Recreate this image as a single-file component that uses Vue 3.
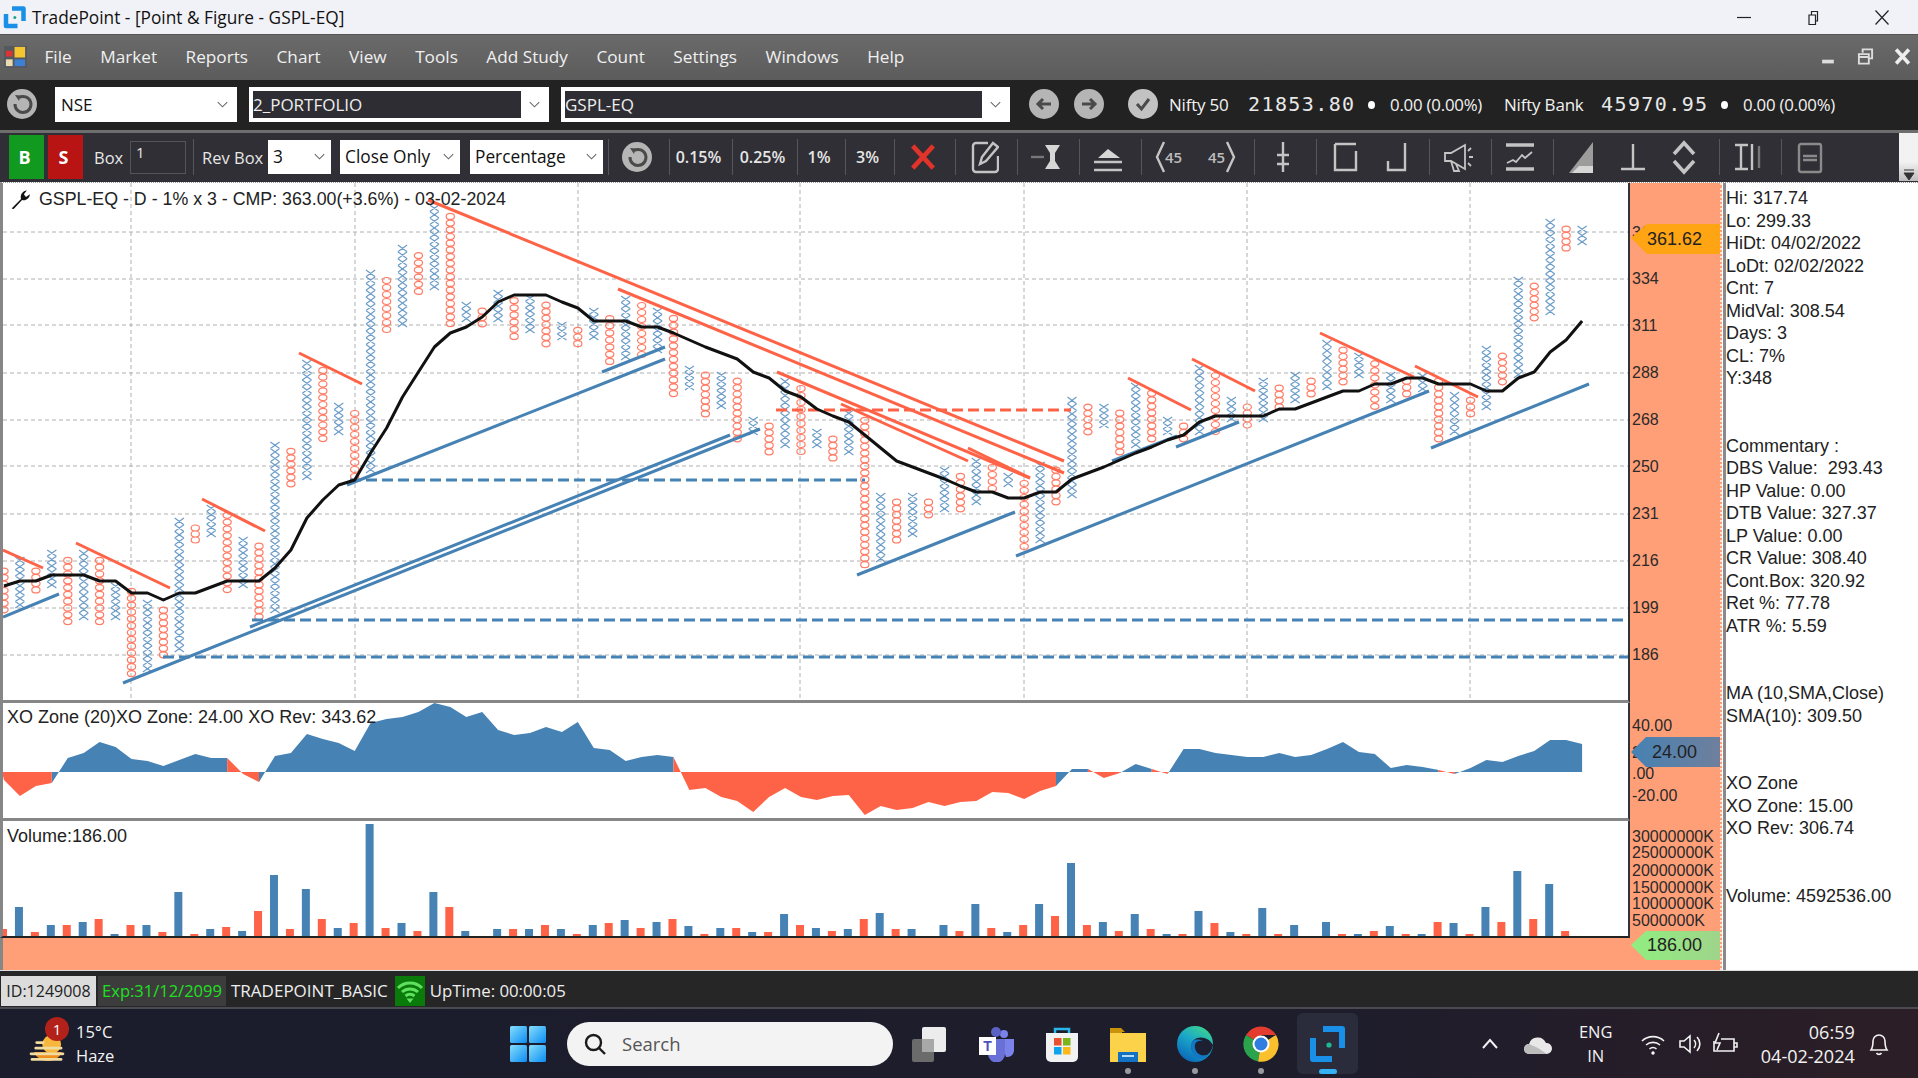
<template>
  <div class="app">
    <header class="titlebar">
      <svg class="title-logo" viewBox="0 0 24 24">
        <path d="M9 3.500H20.500V16" class="logo-stroke" />
        <path d="M3 9V21H14.500" class="logo-stroke" />
        <circle cx="11.800" cy="12.400" r="1.500" fill="#1aa58c" />
      </svg>
      <span class="title-text">TradePoint - [Point &amp; Figure - GSPL-EQ]</span>
      <div class="window-btns">
        <svg viewBox="0 0 16 16"><path d="M1 8H15" /></svg>
        <svg viewBox="0 0 16 16"><path d="M4 5.500H10.500V15H4Z M6.500 5.500V2H12.500V11.500H10.500" /></svg>
        <svg viewBox="0 0 16 16"><path d="M1.500 1L14.500 15M14.500 1L1.500 15" /></svg>
      </div>
    </header>

    <nav class="menubar">
      <svg class="menu-logo" viewBox="0 0 24 24">
        <rect x="0" y="1" width="24" height="23" fill="#55595f" />
        <rect x="11" y="2" width="11" height="11" fill="#f5c431" />
        <rect x="2" y="6" width="7" height="6" fill="#d33" />
        <rect x="2" y="15" width="7" height="7" fill="#e8dcb0" />
        <rect x="11" y="15" width="11" height="7" fill="#3d7fd0" />
      </svg>
      <span v-for="item in menuItems" :key="item" class="menu-item">{{ item }}</span>
      <div class="mdi-btns">
        <svg viewBox="0 0 16 16"><rect x="2" y="11" width="11" height="3.500" fill="#ddd" /></svg>
        <svg viewBox="0 0 18 18"><path d="M6 5V1.500H16V11H13M2 6.500H12.500V16.500H2ZM2 9.500H12.500" fill="none" stroke="#ddd" stroke-width="2" /></svg>
        <svg viewBox="0 0 16 16"><path d="M2 1.500L14 14.500M14 1.500L2 14.500" stroke="#eee" stroke-width="3.400" /></svg>
      </div>
    </nav>

    <div class="symbolbar">
      <svg class="round-btn" viewBox="0 0 30 30">
        <circle cx="15" cy="15" r="15" fill="#b5b5b5" />
        <path d="M12 8.500A8 8 0 1 1 8 15" class="round-glyph" />
        <path d="M8 6L13.500 6.500L12 12Z" fill="#4a4a4a" />
      </svg>
      <div class="combo combo-exchange">
        <span class="combo-text">NSE</span>
        <svg class="chev" viewBox="0 0 14 8"><path d="M1 1L7 7L13 1" /></svg>
      </div>
      <div class="combo combo-portfolio">
        <span class="combo-inner">2_PORTFOLIO</span>
        <svg class="chev" viewBox="0 0 14 8"><path d="M1 1L7 7L13 1" /></svg>
      </div>
      <div class="combo combo-symbol">
        <span class="combo-inner">GSPL-EQ</span>
        <svg class="chev" viewBox="0 0 14 8"><path d="M1 1L7 7L13 1" /></svg>
      </div>
      <svg class="round-btn nav-back" viewBox="0 0 30 30">
        <circle cx="15" cy="15" r="15" fill="#b5b5b5" />
        <path d="M22 15H9M14 10L9 15L14 20" class="round-glyph" />
      </svg>
      <svg class="round-btn nav-next" viewBox="0 0 30 30">
        <circle cx="15" cy="15" r="15" fill="#b5b5b5" />
        <path d="M8 15H21M16 10L21 15L16 20" class="round-glyph" />
      </svg>
      <svg class="round-btn nav-check" viewBox="0 0 30 30">
        <circle cx="15" cy="15" r="15" fill="#c2c2c2" />
        <path d="M9 15L13.500 20L21 10" class="round-glyph" />
      </svg>
      <div class="index index-nifty">
        <span class="index-name">Nifty 50</span>
        <span class="index-price">21853.80</span>
        <span class="index-dot"></span>
        <span class="index-change">0.00 (0.00%)</span>
      </div>
      <div class="index index-bank">
        <span class="index-name">Nifty Bank</span>
        <span class="index-price">45970.95</span>
        <span class="index-dot"></span>
        <span class="index-change">0.00 (0.00%)</span>
      </div>
    </div>

    <div class="toolbar">
      <button class="side-btn buy">B</button>
      <button class="side-btn sell">S</button>
      <span class="tb-label box-label">Box</span>
      <span class="box-input">1</span>
      <span class="tb-sep rev-sep"></span>
      <span class="tb-label rev-label">Rev Box</span>
      <div class="select select-rev">
        <span>3</span>
        <svg class="chev" viewBox="0 0 14 8"><path d="M1 1L7 7L13 1" /></svg>
      </div>
      <div class="select select-close">
        <span>Close Only</span>
        <svg class="chev" viewBox="0 0 14 8"><path d="M1 1L7 7L13 1" /></svg>
      </div>
      <div class="select select-pct">
        <span>Percentage</span>
        <svg class="chev" viewBox="0 0 14 8"><path d="M1 1L7 7L13 1" /></svg>
      </div>
      <div class="tb-text-group g-refresh">
        <svg class="round-btn" viewBox="0 0 30 30">
          <circle cx="15" cy="15" r="15" fill="#b5b5b5" />
          <path d="M12 8.500A8 8 0 1 1 8 15" class="round-glyph" />
          <path d="M8 6L13.500 6.500L12 12Z" fill="#4a4a4a" />
        </svg>
      </div>
      <div class="tb-text-group g-a">0.15%</div>
      <div class="tb-text-group g-b">0.25%</div>
      <div class="tb-text-group g-c">1%</div>
      <div class="tb-text-group g-d">3%</div>
      <div class="tb-text-group g-cross">
        <svg class="cross" viewBox="0 0 30 30"><path d="M4 3L26 27M26 3L4 27" /></svg>
      </div>

      <div class="tb-group">
        <svg class="tool" viewBox="0 0 30 36">
          <path d="M19 4H7a3 3 0 0 0-3 3v23a3 3 0 0 0 3 3h19a3 3 0 0 0 3-3V17" />
          <path d="M11 25l2-7L24 4l5 4-12 14z" />
        </svg>
      </div>
      <div class="tb-group">
        <svg class="tool" viewBox="0 0 30 36">
          <path d="M0 18H13" class="faint" />
          <path d="M14 6h15l-5 8v8l5 8H14l5-8v-8z" class="solid" />
        </svg>
      </div>
      <div class="tb-group">
        <svg class="tool" viewBox="0 0 30 36">
          <path d="M5 19L15 10L27 19Z" class="solid" />
          <path d="M1 23H29M1 31H29" />
        </svg>
      </div>
      <div class="tb-group wide">
        <svg class="tool" viewBox="0 0 30 36">
          <path d="M9 3L2 18L9 33" />
          <text x="10" y="24" class="tool-text">45</text>
        </svg>
        <svg class="tool" viewBox="0 0 30 36">
          <path d="M21 3L28 18L21 33" />
          <text x="2" y="24" class="tool-text">45</text>
        </svg>
      </div>
      <div class="tb-group">
        <svg class="tool" viewBox="0 0 30 36">
          <path d="M15 3V33M9 16H21M9 25H21" />
        </svg>
      </div>
      <div class="tb-group wide">
        <svg class="tool" viewBox="0 0 30 36">
          <path d="M5 5H26M5 5V31H26V12" />
        </svg>
        <svg class="tool" viewBox="0 0 30 36">
          <path d="M24 4V31H7V22" />
        </svg>
      </div>
      <div class="tb-group">
        <svg class="tool thin" viewBox="0 0 30 36">
          <path d="M2 14h6l14-8v24L8 22H2zM8 22l3 10h5l-3-7M25 12l3-3M26 18h4M25 24l3 3" />
        </svg>
      </div>
      <div class="tb-group">
        <svg class="tool thin" viewBox="0 0 30 36">
          <path d="M1 6H29M1 30H29" class="thick" />
          <path d="M2 24l6-3 3 2 6-7 3 3 7-6" />
        </svg>
      </div>
      <div class="tb-group xwide">
        <svg class="tool" viewBox="0 0 30 36">
          <path d="M26 3V34H2Z" class="gray-fill" />
          <path d="M12 27H26V34H5Z" class="solid" />
        </svg>
        <svg class="tool" viewBox="0 0 30 36">
          <path d="M15 5V29M3 30H27" />
        </svg>
        <svg class="tool" viewBox="0 0 30 36">
          <path d="M5 15L15 4L25 15M5 22L15 33L25 22" class="thick" />
        </svg>
      </div>
      <div class="tb-group">
        <svg class="tool" viewBox="0 0 30 36">
          <path d="M2 6H15M2 30H15M8 6V30" />
          <path d="M19 5V31" />
          <path d="M26 7V29" class="faint" />
        </svg>
      </div>
      <div class="tb-group">
        <svg class="tool muted" viewBox="0 0 30 36">
          <rect x="4" y="5" width="22" height="28" rx="2" />
          <path d="M8 17H22M8 21H22" />
        </svg>
      </div>
      <div class="tb-scroll">
        <svg viewBox="0 0 12 12"><path d="M1 1H11M1 4L11 4L6 11Z" /></svg>
      </div>
    </div>

    <div class="workspace">
      <div class="panes">
        <div class="pane pane-price">
          <svg class="pane-svg" viewBox="3 183 1625 517" preserveAspectRatio="none">
            <g class="grid">
              <path v-for="y in gridRows" :key="y" :d="`M3 ${y}H1628`" />
              <path v-for="x in gridCols" :key="x" :d="`M${x} 183V700`" />
            </g>
            <path :d="xMarks" class="x-mark" />
            <path :d="oMarks" class="o-mark" />
            <path v-for="(d, i) in blueDashes" :key="`bd${i}`" :d="d" class="dash-blue" />
            <path d="M776 410H1071" class="dash-red" />
            <path v-for="(d, i) in blueLines" :key="`b${i}`" :d="d" class="line-blue" />
            <path v-for="(d, i) in redLines" :key="`r${i}`" :d="d" class="line-red" />
            <polyline :points="maPoints" class="ma-line" />
          </svg>
          <div class="pane-title price-title">
            <svg class="wrench" viewBox="0 0 20 20">
              <path d="M1.500 18.500L10.500 9.500C9.500 6 11.500 2 16 1.500L13.200 5L15.200 7.500L19 5C18.600 9 15 11.500 11.500 10.500L3.500 19Z" />
            </svg>
            GSPL-EQ - D - 1% x 3 - CMP: 363.00(+3.6%) - 03-02-2024
          </div>
        </div>
        <div class="pane pane-zone">
          <svg class="pane-svg" viewBox="3 703 1625 115" preserveAspectRatio="none">
            <path :d="zoneBlue" fill="#4682b4" />
            <path :d="zoneRed" fill="#ff6347" />
          </svg>
          <div class="pane-title zone-title">XO Zone (20)XO Zone: 24.00 XO Rev: 343.62</div>
        </div>
        <div class="pane pane-volume">
          <svg class="pane-svg" viewBox="3 821 1625 115" preserveAspectRatio="none">
            <rect
              v-for="bar in volumeBars"
              :key="bar.x"
              :x="bar.x"
              :y="bar.y"
              width="8"
              :height="bar.h"
              :fill="bar.fill"
            />
          </svg>
          <div class="pane-title volume-title">Volume:186.00</div>
        </div>
        <div class="pane-foot"></div>
      </div>

      <div class="axis">
        <svg class="axis-svg" viewBox="1630 183 90 787">
          <defs>
            <linearGradient id="zoneTag" x1="0" x2="1" y1="0" y2="0">
              <stop offset="0" stop-color="#4682b4" />
              <stop offset="1" stop-color="#6f7f9c" />
            </linearGradient>
            <linearGradient id="volTag" x1="0" x2="1" y1="0" y2="0">
              <stop offset="0" stop-color="#90ee80" />
              <stop offset="1" stop-color="#9fd48a" />
            </linearGradient>
          </defs>
          <text v-for="t in axisLabels" :key="t.label + t.y" x="1632" :y="t.y" class="axis-text">{{ t.label }}</text>
          <polygon points="1631,238 1647,224 1720,224 1720,254 1647,254" fill="#ffa413" />
          <text x="1647" y="239" class="tag-text">361.62</text>
          <polygon points="1631,752 1646,737 1720,737 1720,767 1646,767" fill="url(#zoneTag)" />
          <text x="1652" y="752" class="tag-text">24.00</text>
          <polygon points="1631,945 1646,931 1720,931 1720,960 1646,960" fill="url(#volTag)" />
          <text x="1647" y="945" class="tag-text">186.00</text>
        </svg>
      </div>

      <aside class="info-panel">
        <div v-for="(line, i) in infoLines" :key="i" class="info-line">{{ line }}</div>
      </aside>
    </div>

    <div class="statusbar">
      <span class="st-id">ID:1249008</span>
      <span class="st-exp">Exp:31/12/2099</span>
      <span class="st-plan">TRADEPOINT_BASIC</span>
      <span class="st-signal">
        <svg viewBox="0 0 30 30">
          <path d="M3 12a17 17 0 0 1 24 0M7 16a12 12 0 0 1 16 0M10.500 20a7 7 0 0 1 9 0" />
          <path d="M15 27L11.500 22.500H18.500Z" class="signal-tip" />
        </svg>
      </span>
      <span class="st-uptime">UpTime: 00:00:05</span>
    </div>

    <footer class="taskbar">
      <div class="weather">
        <svg class="weather-icon" viewBox="0 0 38 32">
          <path d="M5 17H35A16 15 0 0 1 5 17Z" fill="#ef8f1d" />
          <circle cx="24" cy="9" r="10" fill="#f7b73c" />
          <path d="M8 7H15M7 13H34M2 19H36M3 25H34" stroke="#f0dca0" stroke-width="3" stroke-linecap="round" />
        </svg>
        <span class="weather-badge">1</span>
        <div class="weather-text">
          <span>15°C</span>
          <span>Haze</span>
        </div>
      </div>

      <svg class="win-logo" viewBox="0 0 36 36">
        <defs>
          <linearGradient id="winBlue" x1="0" y1="0" x2="1" y2="1">
            <stop offset="0" stop-color="#86defc" />
            <stop offset="1" stop-color="#0b8cf3" />
          </linearGradient>
        </defs>
        <rect x="0" y="0" width="17" height="17" rx="1.500" fill="url(#winBlue)" />
        <rect x="19" y="0" width="17" height="17" rx="1.500" fill="url(#winBlue)" />
        <rect x="0" y="19" width="17" height="17" rx="1.500" fill="url(#winBlue)" />
        <rect x="19" y="19" width="17" height="17" rx="1.500" fill="url(#winBlue)" />
      </svg>

      <div class="search">
        <svg viewBox="0 0 24 24" class="search-icon">
          <circle cx="10.500" cy="10.500" r="7.500" />
          <path d="M16 16L22 22" />
        </svg>
        <span>Search</span>
      </div>

      <div class="task-icons">
        <div class="task-item">
          <svg viewBox="0 0 36 36">
            <rect x="1" y="13" width="22" height="23" rx="2" fill="#6b6b6b" />
            <rect x="11" y="1" width="24" height="25" rx="2" fill="#ececec" />
            <rect x="11" y="13" width="12" height="13" fill="#a8a8a8" />
          </svg>
        </div>
        <div class="task-item">
          <svg viewBox="0 0 36 36">
            <circle cx="26" cy="8" r="4" fill="#7b83eb" />
            <circle cx="18" cy="6" r="5" fill="#5a62c3" />
            <path d="M22 13H36V25A7 7 0 0 1 28 31Z" fill="#7b83eb" />
            <path d="M10 13H27V28A8.500 8.500 0 0 1 10 28Z" fill="#6a71d6" />
            <rect x="1" y="11" width="17" height="18" fill="#fff" />
            <text x="9.500" y="25" class="teams-t">T</text>
          </svg>
        </div>
        <div class="task-item">
          <svg viewBox="0 0 36 36">
            <path d="M11 8V3H25V8" fill="none" stroke="#28b6e8" stroke-width="2.500" />
            <path d="M2 7H34V31A5 5 0 0 1 29 36H7A5 5 0 0 1 2 31Z" fill="#f2f2f2" />
            <rect x="10" y="12" width="7.500" height="7.500" fill="#e8502f" />
            <rect x="19" y="12" width="7.500" height="7.500" fill="#7cb41c" />
            <rect x="10" y="21" width="7.500" height="7.500" fill="#10a4ee" />
            <rect x="19" y="21" width="7.500" height="7.500" fill="#fab914" />
          </svg>
        </div>
        <div class="task-item dot">
          <svg viewBox="0 0 36 36">
            <path d="M0 2H11L15 6H12V12H0Z" fill="#cb9309" />
            <path d="M0 7H36V36H0Z" fill="#fcd24b" />
            <path d="M8 26H28V36H8Z" fill="#1472c4" />
            <path d="M12 29H24V31H12Z" fill="#b7dcf5" />
          </svg>
        </div>
        <div class="task-item dot">
          <svg viewBox="0 0 36 36">
            <defs>
              <linearGradient id="edgeGrad" x1="0.800" y1="0" x2="0.200" y2="1">
                <stop offset="0" stop-color="#3ed68c" />
                <stop offset="0.450" stop-color="#1aa8c8" />
                <stop offset="1" stop-color="#0a62b8" />
              </linearGradient>
            </defs>
            <circle cx="18" cy="18" r="18" fill="url(#edgeGrad)" />
            <path d="M36 19C33 13 26 10 20 12C15 14 13 19 15 24C17 29 24 31 30 29C33 27 35 24 36 19Z" fill="#1d2030" />
            <path d="M14 19C14 14 20 12 26 15C20 14 17 17 18 22C19 28 26 32 33 28C27 36 14 34 14 19Z" fill="#1178c6" />
          </svg>
        </div>
        <div class="task-item dot">
          <svg viewBox="0 0 36 36">
            <path d="M18 18L3 9A17.500 17.500 0 0 1 33 9H18Z" fill="#e33b2e" />
            <path d="M18 18L3 9A17.500 17.500 0 0 0 15 35.500Z" fill="#2ba24c" />
            <path d="M18 18L33 9A17.500 17.500 0 0 1 15 35.500Z" fill="#fbc02d" />
            <circle cx="18" cy="18" r="8.500" fill="#fff" />
            <circle cx="18" cy="18" r="6.500" fill="#2f7de1" />
          </svg>
        </div>
        <div class="task-item active">
          <svg viewBox="0 0 36 36">
            <path d="M13 3H32V22" class="logo-stroke wide-stroke" />
            <path d="M3 12V33H22" class="logo-stroke wide-stroke" />
            <circle cx="19" cy="19" r="2.600" fill="#1db98f" />
          </svg>
        </div>
      </div>

      <div class="tray">
        <svg class="tray-chevron" viewBox="0 0 18 12"><path d="M2 10L9 2L16 10" /></svg>
        <svg class="tray-cloud" viewBox="0 0 30 24">
          <path d="M6 22A5 5 0 0 1 6 12A9 9 0 0 1 23 11A5.500 5.500 0 0 1 24 22Z" fill="#e8e8e8" />
          <path d="M6 22A5 5 0 0 1 6 12L15 16L24 22Z" fill="#bdbdbd" />
        </svg>
        <div class="tray-lang"><span>ENG</span><span>IN</span></div>
        <svg class="tray-wifi" viewBox="0 0 26 24">
          <path d="M2 9a16 16 0 0 1 22 0M6 13a10.500 10.500 0 0 1 14 0M9.500 17a5 5 0 0 1 7 0" />
          <circle cx="13" cy="21" r="1.700" fill="#fff" stroke="none" />
        </svg>
        <svg class="tray-sound" viewBox="0 0 26 24">
          <path d="M3 9H7L13 4V20L7 15H3Z M17 8a6 6 0 0 1 0 8M20 5a10 10 0 0 1 0 14" />
        </svg>
        <svg class="tray-batt" viewBox="0 0 28 26">
          <path d="M10 8H23V20H3V10M23 12H26V16H23" />
          <path d="M8 2L4 12H9L6 19" />
        </svg>
        <div class="tray-clock"><span>06:59</span><span>04-02-2024</span></div>
        <svg class="tray-bell" viewBox="0 0 22 26">
          <path d="M3 19C5 16 5 14 5 10A6 6 0 0 1 17 10C17 14 17 16 19 19ZM8.500 22A3 3 0 0 0 13.500 22" />
        </svg>
      </div>
    </footer>
  </div>
</template>

<script setup>
const menuItems = ['File', 'Market', 'Reports', 'Chart', 'View', 'Tools', 'Add Study', 'Count', 'Settings', 'Windows', 'Help']

const infoLines = [
  'Hi: 317.74', 'Lo: 299.33', 'HiDt: 04/02/2022', 'LoDt: 02/02/2022', 'Cnt: 7',
  'MidVal: 308.54', 'Days: 3', 'CL: 7%', 'Y:348', '', '',
  'Commentary :', 'DBS Value:  293.43', 'HP Value: 0.00', 'DTB Value: 327.37', 'LP Value: 0.00',
  'CR Value: 308.40', 'Cont.Box: 320.92', 'Ret %: 77.78', 'ATR %: 5.59', '', '',
  'MA (10,SMA,Close)', 'SMA(10): 309.50', '', '',
  'XO Zone', 'XO Zone: 15.00', 'XO Rev: 306.74', '', '',
  'Volume: 4592536.00'
]

const colX = i => 4 + 15.94 * i

// top and bottom of each point & figure column, odd columns are X, even are O
const columns = [
  [568, 613], [557, 608], [568, 593], [550, 588], [557, 625], [550, 620], [557, 625], [583, 620], [588, 677], [600, 672],
  [607, 658], [518, 652], [525, 543], [505, 537], [512, 593], [537, 588], [543, 620], [442, 613], [448, 487], [360, 480],
  [367, 442], [403, 435], [410, 480], [270, 473], [277, 333], [245, 327], [252, 295], [205, 290], [213, 327], [302, 322],
  [308, 327], [290, 322], [297, 340], [295, 333], [302, 347], [322, 340], [327, 347], [308, 340], [315, 365], [296, 360],
  [302, 358], [308, 353], [315, 397], [366, 390], [372, 417], [372, 409], [378, 442], [417, 435], [423, 455], [378, 448],
  [385, 455], [429, 448], [436, 461], [410, 455], [417, 568], [493, 562], [499, 543], [493, 537], [499, 518], [467, 512],
  [473, 512], [458, 505], [464, 492], [473, 487], [480, 550], [462, 543], [467, 505], [397, 498], [404, 435], [404, 428],
  [410, 455], [383, 448], [390, 442], [417, 435], [423, 442], [365, 435], [372, 435], [397, 422], [404, 428], [378, 422],
  [385, 410], [372, 403], [378, 397], [340, 390], [347, 385], [353, 378], [360, 410], [372, 403], [378, 397], [373, 392],
  [378, 442], [392, 435], [397, 417], [346, 410], [353, 385], [277, 378], [283, 321], [219, 315], [226, 251], [226, 245]
]

const ma = [
  586, 581, 581, 575, 575, 575, 581, 581, 593, 593, 600, 593, 593, 587, 581, 581, 581, 568, 550, 518,
  500, 485, 480, 453, 428, 397, 372, 347, 333, 327, 317, 302, 295, 295, 295, 302, 308, 321, 321, 321,
  327, 327, 333, 340, 347, 353, 359, 372, 378, 391, 397, 409, 416, 422, 435, 448, 461, 467, 473, 479,
  486, 492, 492, 498, 498, 492, 492, 479, 473, 467, 460, 453, 447, 440, 435, 422, 416, 416, 416, 416,
  409, 409, 403, 397, 391, 391, 384, 384, 378, 378, 384, 384, 384, 391, 391, 378, 372, 352, 340, 321
]

const zone = [
  780, 796, 786, 783, 758, 753, 742, 747, 759, 761, 766, 760, 754, 758, 758, 774, 782, 756, 753, 734,
  739, 743, 751, 723, 719, 717, 712, 703, 707, 717, 712, 730, 735, 733, 727, 732, 722, 748, 750, 761,
  757, 755, 757, 790, 788, 797, 801, 812, 797, 788, 797, 800, 796, 795, 815, 806, 810, 808, 802, 806,
  802, 801, 792, 793, 799, 791, 786, 769, 769, 778, 773, 764, 769, 774, 749, 749, 753, 755, 757, 757,
  753, 757, 755, 749, 742, 752, 754, 768, 765, 767, 770, 774, 768, 760, 762, 756, 751, 740, 740, 744
]

const volumeTops = [
  929, 907, 932, 925, 925, 922, 919, 934, 925, 925, 932, 892, 934, 929, 927, 931, 911, 875, 929, 889,
  919, 928, 923, 824, 928, 923, 931, 892, 907, 931, 936, 929, 929, 929, 925, 929, 934, 925, 923, 920,
  928, 922, 919, 926, 934, 928, 928, 932, 932, 914, 925, 928, 931, 929, 919, 913, 929, 929, 936, 925,
  931, 904, 928, 932, 925, 904, 916, 863, 925, 922, 931, 914, 929, 934, 934, 911, 923, 932, 934, 908,
  934, 925, 936, 922, 934, 934, 931, 926, 934, 934, 922, 923, 934, 907, 922, 871, 919, 884, 931, 936
]

const gridRows = [232, 279, 325, 373, 420, 466, 514, 561, 608, 655]
const gridCols = [131, 355, 578, 800, 1024, 1247, 1470]

const blueDashes = ['M350 480H865', 'M252 620H1630', 'M163 657H1630']

const blueLines = [
  'M3 617L59 594', 'M123 683L760 429', 'M250 627L730 435', 'M347 485L665 359', 'M602 372L665 347',
  'M857 575L1015 512', 'M1016 556L1429 391', 'M1112 461L1177 436', 'M1176 447L1239 422', 'M1431 448L1589 384'
]

const redLines = [
  'M3 550L43 568', 'M76 543L170 588', 'M202 499L265 531', 'M299 353L362 384', 'M428 200L1064 461',
  'M618 289L1064 473', 'M777 372L1030 478', 'M841 404L968 461', 'M968 448L1030 478', 'M1128 378L1191 410',
  'M1192 359L1255 391', 'M1320 333L1414 377', 'M1415 366L1478 397'
]

const buildMarks = () => {
  let xs = ''
  let os = ''
  columns.forEach(([top, bottom], i) => {
    const count = Math.max(1, Math.round((bottom - top) / 6.68))
    const h = (bottom - top) / count
    const x = colX(i)
    for (let k = 0; k < count; k++) {
      const y = top + k * h
      if (i % 2) {
        xs += `M${(x - 4.6).toFixed(1)} ${y.toFixed(1)}L${(x + 4.6).toFixed(1)} ${(y + h).toFixed(1)}`
        xs += `M${(x + 4.6).toFixed(1)} ${y.toFixed(1)}L${(x - 4.6).toFixed(1)} ${(y + h).toFixed(1)}`
      } else {
        const cy = (y + h / 2).toFixed(1)
        os += `M${(x - 4.1).toFixed(1)} ${cy}a4.1 3 0 1 0 8.2 0a4.1 3 0 1 0 -8.2 0`
      }
    }
  })
  return { xs, os }
}

const marks = buildMarks()
const xMarks = marks.xs
const oMarks = marks.os

const maPoints = ma.map((y, i) => `${colX(i).toFixed(1)},${y}`).join(' ')

// each step takes its colour from the sign of the later point
const buildZone = () => {
  const zero = 772
  let blue = ''
  let red = ''
  for (let i = 0; i < zone.length - 1; i++) {
    const x1 = colX(i).toFixed(1)
    const x2 = colX(i + 1).toFixed(1)
    const d = `M${x1} ${zero}L${x1} ${zone[i]}L${x2} ${zone[i + 1]}L${x2} ${zero}Z`
    if (zone[i + 1] < zero) blue += d
    else red += d
  }
  return { blue, red }
}

const zones = buildZone()
const zoneBlue = zones.blue
const zoneRed = `M3 772L3 776L4 780L4 772Z${zones.red}`

const volumeBars = volumeTops.map((top, i) => ({
  x: colX(i) - 5,
  y: top,
  h: 936 - top,
  fill: i % 2 ? '#4682b4' : '#ff6347'
}))

const axisLabels = [
  { label: '361', y: 232 }, { label: '334', y: 278 }, { label: '311', y: 325 }, { label: '288', y: 372 },
  { label: '268', y: 419 }, { label: '250', y: 466 }, { label: '231', y: 513 }, { label: '216', y: 560 },
  { label: '199', y: 607 }, { label: '186', y: 654 },
  { label: '40.00', y: 725 }, { label: '20.00', y: 752 }, { label: '.00', y: 773 }, { label: '-20.00', y: 795 },
  { label: '30000000K', y: 836 }, { label: '25000000K', y: 852 }, { label: '20000000K', y: 870 },
  { label: '15000000K', y: 887 }, { label: '10000000K', y: 903 }, { label: '5000000K', y: 920 }
]
</script>

<style scoped>
.app {
  width: 1918px;
  height: 1078px;
  overflow: hidden;
  display: flex;
  flex-direction: column;
  font-family: "Open Sans", "Noto Sans", sans-serif;
  background: #222;
}

.titlebar {
  height: 35px;
  flex: none;
  display: flex;
  align-items: center;
  background: #f1f2f7;
  border-bottom: 1px solid #555;
  box-sizing: border-box;
  padding-left: 3px;
}
.title-logo {
  width: 24px;
  height: 24px;
}
.logo-stroke {
  fill: none;
  stroke: #1a8fe8;
  stroke-width: 4.5;
  stroke-linejoin: round;
}
.title-text {
  margin-left: 5px;
  font-size: 17.3px;
  color: #111;
}
.window-btns {
  margin-left: auto;
  display: flex;
  align-items: center;
  gap: 53px;
  padding-right: 28px;
}
.window-btns svg {
  width: 16px;
  height: 17px;
  fill: none;
  stroke: #222;
  stroke-width: 1.2;
}

.menubar {
  height: 45px;
  flex: none;
  box-sizing: border-box;
  display: flex;
  align-items: center;
  gap: 28.5px;
  background: linear-gradient(#6a6a6a, #5c5c5c);
  padding: 0 0 2px 4px;
  color: #f0f0f0;
  font-size: 17.2px;
}
.menu-logo {
  width: 23px;
  height: 23px;
  margin-right: -11px;
}
.mdi-btns {
  margin-left: auto;
  display: flex;
  align-items: center;
  gap: 20px;
  padding-right: 7px;
}
.mdi-btns svg {
  width: 17px;
  height: 17px;
}

.symbolbar {
  height: 50px;
  flex: none;
  box-sizing: border-box;
  display: flex;
  align-items: center;
  background: #222;
  padding: 0 0 2px 7px;
  color: #f2f2f2;
}
.round-btn {
  width: 30px;
  height: 30px;
  flex: none;
}
.round-glyph {
  fill: none;
  stroke: #4a4a4a;
  stroke-width: 3;
}
.combo {
  height: 35px;
  box-sizing: border-box;
  background: #fff;
  display: flex;
  align-items: center;
  color: #111;
  font-size: 17px;
}
.combo-exchange {
  width: 182px;
  margin-left: 18px;
  padding-left: 6px;
}
.combo-portfolio {
  width: 300px;
  margin-left: 12px;
}
.combo-symbol {
  width: 449px;
  margin-left: 12px;
}
.combo-inner {
  flex: 1;
  align-self: stretch;
  margin: 4px 0 4px 4px;
  background: #2d2d33;
  color: #eee;
  line-height: 27px;
}
.chev {
  width: 11px;
  height: 7px;
  flex: none;
  margin: 0 9px 0 8px;
  fill: none;
  stroke: #666;
  stroke-width: 1.3;
}
.combo-exchange .chev {
  margin-left: auto;
}
.nav-back {
  margin-left: 19px;
}
.nav-next {
  margin-left: 15px;
}
.nav-check {
  margin-left: 24px;
}
.index {
  display: flex;
  align-items: center;
  white-space: nowrap;
}
.index-nifty {
  margin-left: 11px;
}
.index-bank {
  margin-left: 18px;
}
.index-name {
  font-size: 17px;
  letter-spacing: -0.2px;
}
.index-nifty .index-name {
  width: 79px;
}
.index-bank .index-name {
  width: 97px;
}
.index-price {
  width: 110px;
  font-family: "DejaVu Sans Mono", monospace;
  font-size: 20px;
  letter-spacing: 1.4px;
  color: #e8e8e8;
}
.index-dot {
  width: 7px;
  height: 8px;
  margin: 2px 15px 0 10px;
  border-radius: 50%;
  background: #fff;
}
.index-change {
  width: 96px;
  font-size: 16.8px;
  letter-spacing: -0.2px;
}

.toolbar {
  height: 52px;
  flex: none;
  box-sizing: border-box;
  display: flex;
  align-items: center;
  background: #2f2f35;
  border-top: 3px solid #6e6e6e;
  padding: 0 0 1px 9px;
  color: #e6e6e6;
}
.side-btn {
  width: 35px;
  height: 44px;
  border: 0;
  padding: 0 4px 0 0;
  color: #fff;
  font: 700 18px "Open Sans", sans-serif;
}
.buy {
  background: #12991f;
}
.sell {
  background: #b81414;
  margin-left: 4px;
}
.tb-label {
  font-size: 16.5px;
}
.box-label {
  width: 36px;
  margin-left: 11px;
}
.box-input {
  width: 56px;
  height: 33px;
  box-sizing: border-box;
  border: 1px solid #555;
  padding: 0 0 6px 5px;
  font-size: 15px;
  line-height: 20px;
}
.tb-sep {
  width: 1px;
  height: 36px;
  background: #55555c;
}
.rev-sep {
  margin-left: 7px;
}
.rev-label {
  width: 66px;
  margin-left: 8px;
  white-space: nowrap;
}
.select {
  height: 34px;
  box-sizing: border-box;
  background: #fff;
  color: #111;
  display: flex;
  align-items: center;
  justify-content: space-between;
  font-size: 17.3px;
  padding-left: 5px;
  margin-bottom: 1px;
  white-space: nowrap;
}
.select-rev {
  width: 63px;
}
.select-close {
  width: 120px;
  margin-left: 9px;
}
.select-pct {
  width: 133px;
  margin-left: 10px;
}
.select .chev {
  margin: 0 6px 0 0;
}
.tb-text-group {
  height: 36px;
  flex: none;
  box-sizing: border-box;
  border-left: 1px solid #55555c;
  padding-right: 5px;
  display: flex;
  align-items: center;
  justify-content: center;
  font-size: 16px;
  font-weight: 600;
}
.g-refresh,
.g-cross {
  width: 61px;
}
.select-pct + .g-refresh {
  margin-left: 5px;
}
.g-a {
  width: 63px;
}
.g-b {
  width: 65px;
}
.g-c {
  width: 48px;
}
.g-d {
  width: 49px;
}
.cross {
  width: 28px;
  height: 28px;
  fill: none;
  stroke: #e0332a;
  stroke-width: 5;
}
.tb-group {
  width: 62px;
  height: 36px;
  flex: none;
  box-sizing: border-box;
  border-left: 1px solid #55555c;
  display: flex;
  align-items: center;
  gap: 21px;
  padding-left: 13px;
}
.wide {
  width: 113px;
}
.xwide {
  width: 166px;
}
.tool {
  width: 30px;
  height: 36px;
  flex: none;
  fill: none;
  stroke: #c4c4c4;
  stroke-width: 2.4;
}
.thin {
  stroke-width: 1.8;
}
.thick {
  stroke-width: 3.6;
}
.solid {
  fill: #d6d6d6;
  stroke: none;
}
.faint {
  stroke: #777;
}
.gray-fill {
  fill: #9c9c9c;
  stroke: none;
}
.muted {
  stroke: #8a8a8a;
}
.tool-text {
  fill: #bdbdbd;
  stroke: none;
  font-size: 15px;
  font-family: "Open Sans", sans-serif;
  font-weight: 600;
}
.tb-scroll {
  margin-left: auto;
  width: 19px;
  height: 48px;
  display: flex;
  align-items: flex-end;
  justify-content: center;
  background: linear-gradient(#f2f2f2 60%, #bdbdbd);
}
.tb-scroll svg {
  width: 12px;
  height: 12px;
  fill: #333;
  stroke: #333;
  stroke-width: 1;
}

.workspace {
  height: 788px;
  flex: none;
  display: flex;
  border-top: 1px dotted #999;
  box-sizing: border-box;
  background: #fff;
}
.panes {
  width: 1630px;
  flex: none;
  box-sizing: border-box;
  display: flex;
  flex-direction: column;
  background: #ff9f78;
}
.pane {
  position: relative;
  flex: none;
  box-sizing: border-box;
  background: #fff;
  border-left: 3px solid #868686;
  border-right: 2px solid #333;
}
.pane-price {
  height: 520px;
  border-bottom: 3px solid #868686;
}
.pane-zone {
  height: 118px;
  border-bottom: 3px solid #868686;
}
.pane-volume {
  height: 117px;
  border-bottom: 2px solid #222;
}
.pane-foot {
  flex: 1;
  border-left: 3px solid #868686;
}
.pane-svg {
  display: block;
  width: 1625px;
  height: 100%;
  filter: blur(0.35px);
}
.grid path {
  fill: none;
  stroke: #b0b0b0;
  stroke-width: 1;
  stroke-dasharray: 4 3;
}
.x-mark {
  fill: none;
  stroke: #6d9dc9;
  stroke-width: 1.2;
}
.o-mark {
  fill: none;
  stroke: #ff7c66;
  stroke-width: 1.2;
}
.line-blue {
  fill: none;
  stroke: #4682b4;
  stroke-width: 3;
}
.line-red {
  fill: none;
  stroke: #ff6347;
  stroke-width: 3;
}
.dash-blue {
  fill: none;
  stroke: #4682b4;
  stroke-width: 3.2;
  stroke-dasharray: 11 5;
}
.dash-red {
  fill: none;
  stroke: #ff6347;
  stroke-width: 3.2;
  stroke-dasharray: 11 5;
}
.ma-line {
  fill: none;
  stroke: #111;
  stroke-width: 3;
  stroke-linejoin: round;
}
.pane-title {
  position: absolute;
  left: 4px;
  font-family: "Liberation Sans", Arial, sans-serif;
  font-size: 18px;
  line-height: 22px;
  color: #222;
  white-space: nowrap;
}
.price-title {
  top: 5px;
  left: 7px;
  display: flex;
  align-items: center;
  gap: 8px;
  font-size: 17.8px;
}
.wrench {
  width: 21px;
  height: 21px;
  fill: #111;
}
.zone-title {
  top: 3px;
}
.volume-title {
  top: 4px;
}

.axis {
  width: 90px;
  flex: none;
  background: #ff9f78;
  border-right: 2px dotted #ffe3d8;
}
.axis-svg {
  display: block;
  width: 90px;
  height: 787px;
}
.axis-text {
  font-family: "Liberation Sans", Arial, sans-serif;
  font-size: 16px;
  dominant-baseline: central;
  fill: #2a2a2a;
}
.tag-text {
  font-family: "Liberation Sans", Arial, sans-serif;
  font-size: 18px;
  dominant-baseline: central;
  fill: #222;
}

.info-panel {
  flex: 1;
  box-sizing: border-box;
  border-left: 3px solid #8a8a8a;
  margin-left: 1px;
  padding: 4px 0 0 0;
  font-family: "Liberation Sans", Arial, sans-serif;
  font-size: 18px;
  color: #222;
}
.info-line {
  height: 22.5px;
  line-height: 22.5px;
  white-space: pre;
}

.statusbar {
  height: 37px;
  flex: none;
  box-sizing: border-box;
  display: flex;
  align-items: stretch;
  padding: 5px 0 1px 1px;
  background: #262626;
  border-top: 1px solid #ddd;
  font-size: 16.8px;
  color: #eee;
  white-space: nowrap;
}
.st-id {
  width: 95px;
  background: #dcdcdc;
  color: #222;
  font-size: 16px;
  text-align: center;
  line-height: 30px;
}
.st-exp {
  width: 128px;
  margin-left: 2px;
  background: #3c3c3c;
  color: #1fe01f;
  font-size: 16.5px;
  text-align: center;
  line-height: 30px;
}
.st-plan {
  margin-left: 5px;
  font-size: 17px;
  line-height: 30px;
}
.st-signal {
  width: 30px;
  margin-left: 7px;
  background: #0a7a0a;
}
.st-signal svg {
  display: block;
  width: 30px;
  height: 30px;
  fill: none;
  stroke: #5fe05f;
  stroke-width: 3;
}
.signal-tip {
  fill: #5fe05f;
  stroke: none;
}
.st-uptime {
  margin-left: 5px;
  line-height: 30px;
}

.taskbar {
  flex: 1;
  display: flex;
  align-items: center;
  background: linear-gradient(90deg, #1b1d2c, #1e1d2c 70%, #2c1e26);
  border-top: 2px solid #4a4a50;
  color: #f2f2f2;
}
.weather {
  position: relative;
  display: flex;
  align-items: center;
  margin-left: 29px;
  width: 120px;
  flex: none;
}
.weather-icon {
  width: 36px;
  height: 30px;
  margin-top: 14px;
}
.weather-badge {
  position: absolute;
  left: 16px;
  top: -3px;
  width: 24px;
  height: 24px;
  border-radius: 50%;
  background: #b3221a;
  color: #fff;
  font-size: 15px;
  line-height: 24px;
  text-align: center;
}
.weather-text {
  display: flex;
  flex-direction: column;
  margin-left: 11px;
  font-size: 16.5px;
  line-height: 24px;
}
.win-logo {
  width: 36px;
  height: 36px;
  flex: none;
  margin-left: 361px;
}
.search {
  width: 326px;
  height: 44px;
  flex: none;
  margin-left: 21px;
  box-sizing: border-box;
  display: flex;
  align-items: center;
  gap: 15px;
  padding-left: 16px;
  border-radius: 22px;
  background: #f3f3f3;
  color: #555;
  font-size: 18.5px;
}
.search-icon {
  width: 24px;
  height: 24px;
  fill: none;
  stroke: #1b1b1b;
  stroke-width: 2.4;
}
.task-icons {
  display: flex;
  margin-left: 6px;
  align-self: stretch;
  padding: 4px 0;
}
.task-item {
  position: relative;
  width: 60.4px;
  margin-right: 6px;
  display: flex;
  align-items: center;
  justify-content: center;
  border-radius: 6px;
}
.task-item svg {
  width: 36px;
  height: 36px;
}
.task-item.dot::after,
.task-item.active::after {
  content: "";
  position: absolute;
  bottom: 0;
  left: 27px;
  width: 6px;
  height: 6px;
  border-radius: 50%;
  background: #9a9a9e;
}
.task-item.active {
  background: #2a2c3c;
}
.task-item.active::after {
  left: 22px;
  width: 18px;
  height: 5px;
  border-radius: 3px;
  background: #35b0f5;
}
.wide-stroke {
  stroke-width: 6;
}
.teams-t {
  font: 700 14px "Liberation Sans", sans-serif;
  text-anchor: middle;
  fill: #4b53bc;
}
.tray {
  flex: 1;
  display: flex;
  align-items: center;
  padding-left: 117px;
}
.tray svg {
  flex: none;
  fill: none;
  stroke: #f2f2f2;
  stroke-width: 1.6;
}
.tray-chevron {
  width: 18px;
  height: 12px;
  stroke-width: 2 !important;
}
.tray-cloud {
  width: 30px;
  height: 24px;
  margin-left: 24px;
  stroke: none !important;
}
.tray-lang {
  width: 46px;
  margin-left: 20px;
  display: flex;
  flex-direction: column;
  align-items: center;
  font-size: 16.5px;
  line-height: 24px;
}
.tray-wifi {
  width: 26px;
  height: 24px;
  margin-left: 21px;
}
.tray-sound {
  width: 26px;
  height: 24px;
  margin-left: 11px;
}
.tray-batt {
  width: 28px;
  height: 26px;
  margin-left: 8px;
}
.tray-clock {
  width: 106px;
  margin-left: 10px;
  display: flex;
  flex-direction: column;
  align-items: flex-end;
  font-size: 18px;
  line-height: 24px;
}
.tray-bell {
  width: 22px;
  height: 26px;
  margin-left: 13px;
}
</style>

<style>
html, body {
  margin: 0;
  background: #222;
}
</style>
